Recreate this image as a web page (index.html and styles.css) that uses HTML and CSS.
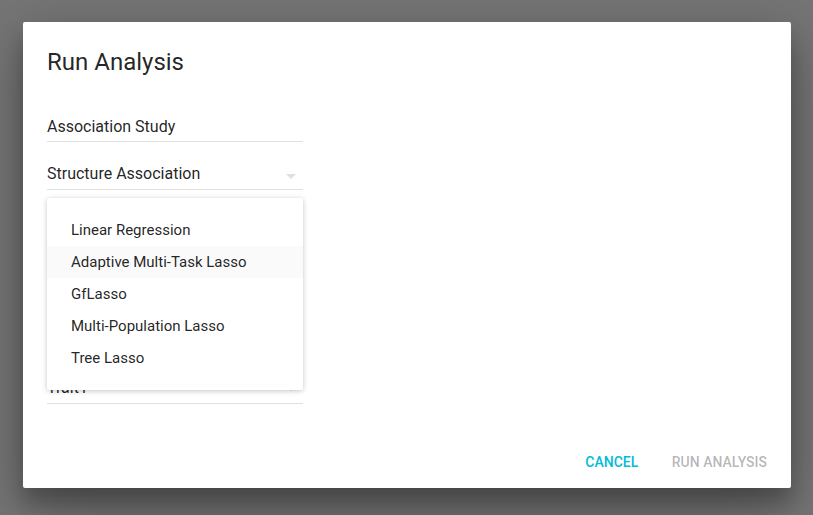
FILE: index.html
```html
<!DOCTYPE html>
<html>
<head>
<meta charset="utf-8">
<link rel="stylesheet" href="styles.css">
</head>
<body>
<div class="dialog">
  <h3 class="dialog-title">Run Analysis</h3>
  <div class="dialog-body">
    <div class="field field-first">
      <span class="field-text">Association Study</span>
    </div>
    <div class="field">
      <span class="field-text">Structure Association</span>
      <svg class="drop-icon" viewBox="0 0 24 24" width="24" height="24"><path d="M7 10l5 5 5-5z"/></svg>
    </div>
    <div class="field field-trait">
      <span class="field-text">Trait1</span>
      <svg class="drop-icon" viewBox="0 0 24 24" width="24" height="24"><path d="M7 10l5 5 5-5z"/></svg>
    </div>
    <div class="menu">
      <div class="menu-item">Linear Regression</div>
      <div class="menu-item menu-item-active">Adaptive Multi-Task Lasso</div>
      <div class="menu-item">GfLasso</div>
      <div class="menu-item">Multi-Population Lasso</div>
      <div class="menu-item">Tree Lasso</div>
    </div>
  </div>
  <div class="dialog-actions">
    <button class="btn btn-primary">Cancel</button>
    <button class="btn btn-disabled">Run Analysis</button>
  </div>
</div>
</body>
</html>
```

FILE: styles.css
```css
html, body {
  margin: 0;
  padding: 0;
}
body {
  background: #757575;
  height: 515px;
  overflow: hidden;
  font-family: Roboto, "Liberation Sans", sans-serif;
  color: rgba(0, 0, 0, 0.87);
  padding: 22px 0 0 23px;
  box-sizing: border-box;
}
.dialog {
  width: 768px;
  height: 466px;
  background: #fff;
  border-radius: 2px;
  box-shadow: rgba(0, 0, 0, 0.3) 0 19px 60px, rgba(0, 0, 0, 0.22) 0 15px 20px;
  display: flex;
  flex-direction: column;
  box-sizing: border-box;
}
.dialog-title {
  margin: 0;
  padding: 24px 24px 16px;
  font-size: 24px;
  line-height: 32px;
  font-weight: 400;
  color: rgba(0, 0, 0, 0.87);
}
.dialog-body {
  position: relative;
  padding: 0 24px;
  flex: 1;
}
.field {
  width: 256px;
  height: 47px;
  border-bottom: 1px solid #e0e0e0;
  display: flex;
  align-items: flex-end;
  justify-content: space-between;
}
.field-text {
  font-size: 16px;
  line-height: 24px;
  margin-bottom: 3px;
}
.field-first .field-text {
  margin-bottom: 2px;
}
.drop-icon {
  fill: #e0e0e0;
  margin-bottom: 1px;
  flex: none;
}
.field-trait {
  margin-top: 166px;
}
.field-trait .drop-icon {
  margin-bottom: 3px;
}
.menu {
  position: absolute;
  top: 104px;
  left: 24px;
  width: 256px;
  padding: 16px 0;
  background: #fff;
  border-radius: 2px;
  box-shadow: rgba(0, 0, 0, 0.12) 0 1px 6px, rgba(0, 0, 0, 0.12) 0 1px 4px;
}
.menu-item {
  font-size: 15px;
  line-height: 32px;
  padding: 0 24px;
  color: rgba(0, 0, 0, 0.87);
}
.menu-item-active {
  background: rgba(0, 0, 0, 0.02);
}
.dialog-actions {
  display: flex;
  justify-content: flex-end;
  padding: 8px;
}
.btn {
  font-family: Roboto, "Liberation Sans", sans-serif;
  font-size: 14px;
  font-weight: 500;
  text-transform: uppercase;
  height: 36px;
  min-width: 88px;
  padding: 0 16px;
  border: none;
  background: transparent;
  border-radius: 2px;
  line-height: 36px;
}
.btn-primary {
  color: #00bcd4;
}
.btn-disabled {
  color: rgba(0, 0, 0, 0.3);
}
```
